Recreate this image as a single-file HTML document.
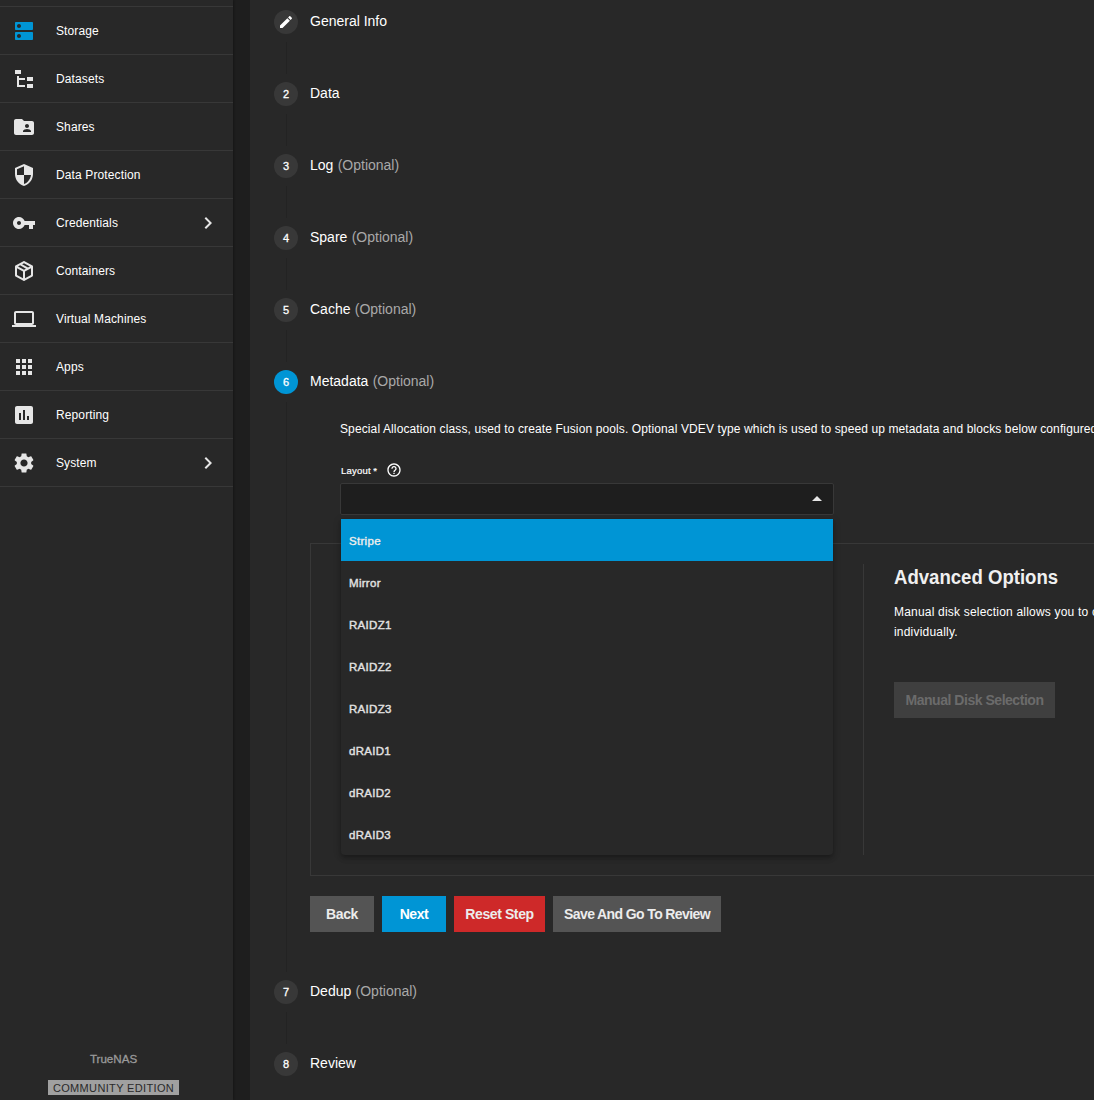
<!DOCTYPE html>
<html lang="en">
<head>
<meta charset="utf-8">
<title>TrueNAS - Pool Creation Wizard</title>
<style>
*{box-sizing:border-box;margin:0;padding:0}
html,body{width:1094px;height:1100px;overflow:hidden;background:#1e1e1e}
body{font-family:"Liberation Sans",Arial,sans-serif;color:#fff;position:relative;font-size:12px}
svg{display:block}
#side{position:absolute;left:0;top:0;width:233px;height:1100px;background:#282828;box-shadow:1px 0 2px rgba(0,0,0,.25)}
#side .topline{position:absolute;left:0;top:6px;width:233px;height:1px;background:#383838}
#side .item{position:absolute;left:0;width:233px;height:48px;border-bottom:1px solid #383838}
#side .item svg.ic{position:absolute;left:12px;top:12px;width:24px;height:24px;fill:#e6e6e6}
#side .item svg.ic.act{fill:#0095d5}
#side .item .lbl{position:absolute;left:56px;top:0;line-height:49px;letter-spacing:.12px;font-size:12px;color:#fff;white-space:nowrap}
#side .item svg.chev{position:absolute;left:196px;top:12px;width:24px;height:24px;fill:#e6e6e6}
#brand{position:absolute;left:0;width:227px;top:1051.5px;text-align:center;font-size:11.6px;color:#9a9a9a;line-height:14px;-webkit-text-stroke:.3px #9a9a9a}
#edition{position:absolute;left:48px;top:1080px;width:131px;height:15px;background:#a0a0a0;color:#2a2a2a;font-size:11px;letter-spacing:.35px;line-height:16px;text-align:center;white-space:nowrap}
#card{position:absolute;left:250px;top:0;width:844px;height:1100px;background:#282828}
#card > *{margin-left:-250px}
.step{position:absolute;left:274px;height:24px}
.step .circ{position:absolute;left:0;top:0;width:24px;height:24px;border-radius:50%;background:#383838;color:#fff;font-size:11px;line-height:25.5px;text-align:center;-webkit-text-stroke:.3px #fff}
.step .circ svg{position:absolute;left:4px;top:4px;width:16px;height:16px;fill:#fff}
.step .circ.on{background:#0095d5}
.step .ttl{position:absolute;left:36px;top:0;line-height:22px;font-size:14px;white-space:nowrap;color:#fff}
.step .ttl i{font-style:normal;color:#a9a9a9;margin-left:4.3px}
.vline{position:absolute;left:286px;width:1px;background:#232323}
#desc{position:absolute;left:340px;top:420px;font-size:12px;letter-spacing:.115px;line-height:18px;white-space:nowrap;color:#fff}
#lay{position:absolute;left:341px;top:462.5px;font-size:9.5px;letter-spacing:.2px;line-height:16px;white-space:nowrap;color:#fff;-webkit-text-stroke:.2px #fff}
#lay b{font-weight:normal;margin-left:2.5px}
#help{position:absolute;left:386px;top:462px;width:16px;height:16px;fill:#fff}
#sel{position:absolute;left:340px;top:483px;width:494px;height:32px;background:#1e1e1e;border:1px solid #383838;border-radius:2px}
#sel:after{content:"";position:absolute;left:471px;top:12px;border:5px solid transparent;border-top:none;border-bottom:5px solid #e6e6e6}
#box{position:absolute;left:310px;top:543px;width:800px;height:333px;border:1px solid #383838}
#divd{position:absolute;left:863px;top:564px;width:1px;height:291px;background:#383838}
#adv{position:absolute;left:894px;top:563px;font-size:20px;line-height:28px;font-weight:bold;white-space:nowrap;transform-origin:0 50%;transform:scaleX(.929);color:#f0f0f0}
#advt{position:absolute;left:894px;top:602px;font-size:12px;letter-spacing:.2px;line-height:20px;white-space:nowrap;color:#fff}
#mds{position:absolute;left:894px;top:682px;width:161px;height:36px;background:#3f3f3f;color:#6b6b6b;font-weight:bold;font-size:14px;line-height:36px;text-align:center;letter-spacing:-.47px;white-space:nowrap}
#panel{position:absolute;left:341px;top:519px;width:492px;height:336px;background:#282828;border-radius:0 0 4px 4px;box-shadow:0 2px 4px -1px rgba(0,0,0,.2),0 4px 5px 0 rgba(0,0,0,.14),0 1px 10px 0 rgba(0,0,0,.12)}
#panel .opt{height:42px;line-height:44px;padding-left:8px;font-size:11.5px;letter-spacing:.3px;color:#e2e2e2;white-space:nowrap;-webkit-text-stroke:.4px #e2e2e2}
#panel .opt.sel{background:#0095d5;color:#fff}
.btn{position:absolute;top:896px;height:36px;line-height:37px;font-size:14px;font-weight:bold;text-align:center;color:#ececec;background:#545454;white-space:nowrap;letter-spacing:-.4px}
</style>
</head>
<body>
<div id="side">
<div class="topline"></div>
<div class="item" style="top:7px"><svg class="ic act" viewBox="0 0 24 24"><path d="M20 13H4c-.55 0-1 .45-1 1v6c0 .55.45 1 1 1h16c.55 0 1-.45 1-1v-6c0-.55-.45-1-1-1zM7 19c-1.1 0-2-.9-2-2s.9-2 2-2 2 .9 2 2-.9 2-2 2zM20 3H4c-.55 0-1 .45-1 1v6c0 .55.45 1 1 1h16c.55 0 1-.45 1-1V4c0-.55-.45-1-1-1zM7 9c-1.1 0-2-.9-2-2s.9-2 2-2 2 .9 2 2-.9 2-2 2z"/></svg><span class="lbl">Storage</span></div>
<div class="item" style="top:55px"><svg class="ic" viewBox="0 0 24 24"><rect x="3" y="3" width="6" height="4"/><rect x="5" y="9" width="2" height="11"/><rect x="5" y="11" width="8" height="2"/><rect x="5" y="18" width="8" height="2"/><rect x="15" y="10" width="6" height="4"/><rect x="15" y="17" width="6" height="4"/></svg><span class="lbl">Datasets</span></div>
<div class="item" style="top:103px"><svg class="ic" viewBox="0 0 24 24"><path d="M20 6h-8l-2-2H4c-1.1 0-1.99.9-1.99 2L2 18c0 1.1.9 2 2 2h16c1.1 0 2-.9 2-2V8c0-1.1-.9-2-2-2zm-5 3c1.1 0 2 .9 2 2s-.9 2-2 2-2-.9-2-2 .9-2 2-2zm4 8h-8v-1c0-1.33 2.67-2 4-2s4 .67 4 2v1z"/></svg><span class="lbl">Shares</span></div>
<div class="item" style="top:151px"><svg class="ic" viewBox="0 0 24 24"><path d="M12 1L3 5v6c0 5.55 3.84 10.74 9 12 5.16-1.26 9-6.45 9-12V5l-9-4zm0 10.990h7c-.53 4.12-3.28 7.79-7 8.940V12H5V6.300l7-3.110v8.800z"/></svg><span class="lbl">Data Protection</span></div>
<div class="item" style="top:199px"><svg class="ic" viewBox="0 0 24 24"><path d="M12.650 10C11.830 7.670 9.610 6 7 6c-3.310 0-6 2.690-6 6s2.690 6 6 6c2.610 0 4.830-1.670 5.650-4H17v4h4v-4h2v-4H12.650zM7 14c-1.100 0-2-.9-2-2s.9-2 2-2 2 .9 2 2-.9 2-2 2z"/></svg><span class="lbl">Credentials</span><svg class="chev" viewBox="0 0 24 24"><path d="M10 6L8.590 7.410 13.170 12l-4.580 4.590L10 18l6-6z"/></svg></div>
<div class="item" style="top:247px"><svg class="ic" viewBox="0 0 24 24"><path d="M21,16.500C21,16.880 20.790,17.210 20.470,17.380L12.570,21.820C12.410,21.940 12.210,22 12,22C11.790,22 11.590,21.940 11.430,21.820L3.530,17.380C3.210,17.210 3,16.880 3,16.500V7.500C3,7.120 3.210,6.790 3.530,6.620L11.430,2.180C11.590,2.060 11.790,2 12,2C12.210,2 12.410,2.060 12.570,2.180L20.470,6.620C20.790,6.790 21,7.120 21,7.500V16.500M12,4.150L10.110,5.220L16,8.610L17.960,7.500L12,4.150M6.040,7.500L12,10.850L13.960,9.750L8.080,6.350L6.040,7.500M5,15.910L11,19.290V12.580L5,9.210V15.910M19,15.910V9.210L13,12.580V19.290L19,15.910Z"/></svg><span class="lbl">Containers</span></div>
<div class="item" style="top:295px"><svg class="ic" viewBox="0 0 24 24"><path d="M20 18c1.100 0 1.990-.9 1.990-2L22 6c0-1.100-.9-2-2-2H4c-1.100 0-2 .9-2 2v10c0 1.100.9 2 2 2H0v2h24v-2h-4zM4 6h16v10H4V6z"/></svg><span class="lbl">Virtual Machines</span></div>
<div class="item" style="top:343px"><svg class="ic" viewBox="0 0 24 24"><path d="M4 8h4V4H4v4zm6 12h4v-4h-4v4zm-6 0h4v-4H4v4zm0-6h4v-4H4v4zm6 0h4v-4h-4v4zm6-10v4h4V4h-4zm-6 4h4V4h-4v4zm6 6h4v-4h-4v4zm0 6h4v-4h-4v4z"/></svg><span class="lbl">Apps</span></div>
<div class="item" style="top:391px"><svg class="ic" viewBox="0 0 24 24"><path d="M19 3H5c-1.100 0-2 .9-2 2v14c0 1.100.9 2 2 2h14c1.100 0 2-.9 2-2V5c0-1.100-.9-2-2-2zM9 17H7v-7h2v7zm4 0h-2V7h2v10zm4 0h-2v-4h2v4z"/></svg><span class="lbl">Reporting</span></div>
<div class="item" style="top:439px"><svg class="ic" viewBox="0 0 24 24"><path d="M19.140 12.940c.04-.3.060-.610.060-.940 0-.320-.020-.640-.070-.940l2.030-1.580c.180-.140.230-.410.120-.610l-1.920-3.320c-.120-.220-.370-.290-.590-.220l-2.390.960c-.5-.380-1.030-.7-1.620-.940l-.360-2.540c-.04-.240-.240-.410-.480-.410h-3.840c-.240 0-.430.170-.470.410l-.360 2.540c-.590.240-1.130.570-1.620.940l-2.390-.960c-.220-.080-.470 0-.590.220L2.740 8.870c-.120.210-.080.470.120.610l2.030 1.580c-.05.3-.09.630-.09.940s.02.640.07.940l-2.030 1.580c-.180.140-.230.410-.120.610l1.920 3.320c.120.220.370.290.590.220l2.390-.960c.5.380 1.030.7 1.620.940l.360 2.540c.05.240.240.410.480.410h3.840c.240 0 .440-.170.470-.410l.360-2.540c.590-.240 1.130-.560 1.620-.940l2.390.960c.220.080.470 0 .590-.220l1.920-3.320c.120-.220.070-.470-.120-.610l-2.010-1.580zM12 15.600c-1.980 0-3.600-1.620-3.600-3.600s1.620-3.600 3.600-3.600 3.600 1.620 3.600 3.600-1.620 3.600-3.600 3.600z"/></svg><span class="lbl">System</span><svg class="chev" viewBox="0 0 24 24"><path d="M10 6L8.590 7.410 13.170 12l-4.580 4.590L10 18l6-6z"/></svg></div>
<div id="brand">TrueNAS</div>
<div id="edition">COMMUNITY EDITION</div>
</div>
<div id="card">
<div class="step" style="top:10px"><div class="circ"><svg viewBox="0 0 24 24"><path d="M3 17.250V21h3.750L17.810 9.940l-3.750-3.750L3 17.250zM20.710 7.040c.390-.390.390-1.020 0-1.410l-2.340-2.340c-.390-.390-1.020-.390-1.410 0l-1.830 1.830 3.750 3.750 1.830-1.830z"/></svg></div><div class="ttl">General Info</div></div>
<div class="step" style="top:82px"><div class="circ">2</div><div class="ttl">Data</div></div>
<div class="step" style="top:154px"><div class="circ">3</div><div class="ttl">Log<i>(Optional)</i></div></div>
<div class="step" style="top:226px"><div class="circ">4</div><div class="ttl">Spare<i>(Optional)</i></div></div>
<div class="step" style="top:298px"><div class="circ">5</div><div class="ttl">Cache<i>(Optional)</i></div></div>
<div class="step" style="top:370px"><div class="circ on">6</div><div class="ttl">Metadata<i>(Optional)</i></div></div>
<div class="step" style="top:980px"><div class="circ">7</div><div class="ttl">Dedup<i>(Optional)</i></div></div>
<div class="step" style="top:1052px"><div class="circ">8</div><div class="ttl">Review</div></div>
<div class="vline" style="top:42px;height:32px"></div>
<div class="vline" style="top:114px;height:32px"></div>
<div class="vline" style="top:186px;height:32px"></div>
<div class="vline" style="top:258px;height:32px"></div>
<div class="vline" style="top:330px;height:32px"></div>
<div class="vline" style="top:402px;height:570px"></div>
<div class="vline" style="top:1012px;height:32px"></div>
<div id="desc">Special Allocation class, used to create Fusion pools. Optional VDEV type which is used to speed up metadata and blocks below configured small block size.</div>
<div id="lay">Layout<b>*</b></div>
<svg id="help" viewBox="0 0 24 24"><path d="M11 18h2v-2h-2v2zm1-16C6.480 2 2 6.480 2 12s4.480 10 10 10 10-4.480 10-10S17.520 2 12 2zm0 18c-4.410 0-8-3.590-8-8s3.590-8 8-8 8 3.590 8 8-3.590 8-8 8zm0-14c-2.210 0-4 1.790-4 4h2c0-1.100.9-2 2-2s2 .9 2 2c0 2-3 1.750-3 5h2c0-2.250 3-2.500 3-5 0-2.210-1.790-4-4-4z"/></svg>
<div id="sel"></div>
<div id="box"></div>
<div id="divd"></div>
<div id="adv">Advanced Options</div>
<div id="advt">Manual disk selection allows you to create VDEVs and add disks to those VDEVs<br>individually.</div>
<div id="mds">Manual Disk Selection</div>
<div id="panel">
<div class="opt sel">Stripe</div>
<div class="opt">Mirror</div>
<div class="opt">RAIDZ1</div>
<div class="opt">RAIDZ2</div>
<div class="opt">RAIDZ3</div>
<div class="opt">dRAID1</div>
<div class="opt">dRAID2</div>
<div class="opt">dRAID3</div>
</div>
<div class="btn" style="left:310px;width:64px">Back</div>
<div class="btn" style="left:382px;width:64px;background:#0095d5;color:#fff">Next</div>
<div class="btn" style="left:454px;width:91px;background:#ce2929">Reset Step</div>
<div class="btn" style="left:553px;width:168px;letter-spacing:-.61px">Save And Go To Review</div>
</div>
</body>
</html>
